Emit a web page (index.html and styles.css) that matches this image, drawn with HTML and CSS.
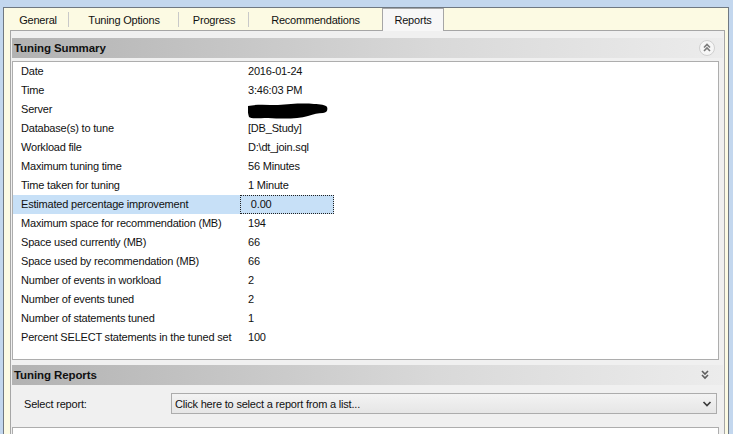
FILE: index.html
```html
<!DOCTYPE html>
<html lang="en">
<head>
    <meta charset="UTF-8">
    <meta name="viewport" content="width=device-width, initial-scale=1.0">
    <title>Database Engine Tuning Advisor - Reports</title>
    <link rel="stylesheet" href="styles.css">
</head>
<body>
    <div class="frame">

        <div class="tabs">
            <div class="tab sep" style="width: 62px">General</div>
            <div class="tab sep" style="width: 110px">Tuning Options</div>
            <div class="tab sep" style="width: 70px">Progress</div>
            <div class="tab" style="width: 133px">Recommendations</div>
            <div class="tab active" style="width: 62px">Reports</div>
        </div>

        <div class="page">

            <div class="section-head">
                <span>Tuning Summary</span>
                <svg class="collapse" width="16" height="16" viewBox="0 0 16 16">
                    <circle cx="8" cy="8" r="7.5" fill="#f6f6f6" stroke="#cfcfcf"/>
                    <path d="M5 7.5 L8 4.5 L11 7.5 M5 11 L8 8 L11 11" fill="none" stroke="#7a7a7a" stroke-width="1.6"/>
                </svg>
            </div>

            <div class="summary">
                <div class="row"><span class="key">Date</span><span class="val">2016-01-24</span></div>
                <div class="row"><span class="key">Time</span><span class="val">3:46:03 PM</span></div>
                <div class="row"><span class="key">Server</span><span class="val blot-cell">
                    <svg class="blot" width="80" height="16" viewBox="0 0 80 16">
                        <path d="M0 3 C8 1 20 2 30 2 C42 1 55 0 66 1 C72 1 78 2 79 4 C80 7 79 10 75 10 C70 10 66 11 60 13 C50 16 35 16 20 15 C10 15 3 16 1 14 C0 10 -1 6 0 3 Z" fill="#000"/>
                    </svg>
                </span></div>
                <div class="row"><span class="key">Database(s) to tune</span><span class="val">[DB_Study]</span></div>
                <div class="row"><span class="key">Workload file</span><span class="val">D:\dt_join.sql</span></div>
                <div class="row"><span class="key">Maximum tuning time</span><span class="val">56 Minutes</span></div>
                <div class="row"><span class="key">Time taken for tuning</span><span class="val">1 Minute</span></div>
                <div class="row sel"><span class="key">Estimated percentage improvement</span><span class="val">&nbsp;0.00</span></div>
                <div class="row"><span class="key">Maximum space for recommendation (MB)</span><span class="val">194</span></div>
                <div class="row"><span class="key">Space used currently (MB)</span><span class="val">66</span></div>
                <div class="row"><span class="key">Space used by recommendation (MB)</span><span class="val">66</span></div>
                <div class="row"><span class="key">Number of events in workload</span><span class="val">2</span></div>
                <div class="row"><span class="key">Number of events tuned</span><span class="val">2</span></div>
                <div class="row"><span class="key">Number of statements tuned</span><span class="val">1</span></div>
                <div class="row"><span class="key">Percent SELECT statements in the tuned set</span><span class="val">100</span></div>
            </div>

            <div class="section-head reports-head">
                <span>Tuning Reports</span>
                <svg class="expand" width="16" height="16" viewBox="0 0 16 16">
                    <path d="M5 4 L8 7 L11 4 M5 8 L8 11 L11 8" fill="none" stroke="#5e5e5e" stroke-width="1.6"/>
                </svg>
            </div>

            <div class="select-row">
                <label class="select-label">Select report:</label>
                <div class="dropdown">
                    <span>Click here to select a report from a list...</span>
                    <svg width="10" height="8" viewBox="0 0 10 8">
                        <path d="M1.5 2 L5 5.5 L8.5 2" fill="none" stroke="#3c3c3c" stroke-width="1.7"/>
                    </svg>
                </div>
            </div>

            <div class="report-box"></div>

        </div>
    </div>
</body>
</html>
```

FILE: styles.css
```css
html, body {
    margin: 0;
    height: 100%;
    overflow: hidden;
}

body {
    background-color: #c3d7ee;
    font-family: "Liberation Sans", Arial, sans-serif;
    font-size: 11px;
    letter-spacing: -0.2px;
    color: #111;
    padding: 7px 4px 0 3px;
    box-sizing: border-box;
}

.frame {
    height: 100%;
    box-sizing: border-box;
    border: 1px solid #6f7882;
    border-bottom: none;
    background-color: #fcfae3;
    display: flex;
    flex-direction: column;
    overflow: hidden;
}

.tabs {
    display: flex;
    align-items: flex-end;
    height: 22px;
    flex-shrink: 0;
    padding-left: 3px;
}

.tab {
    height: 22px;
    display: flex;
    align-items: center;
    justify-content: center;
    box-sizing: border-box;
    padding-top: 1px;
}

.tab.sep {
    background: linear-gradient(#c9c9c9, #c9c9c9) right 4px / 1px 15px no-repeat;
}

.tab.active {
    height: 23px;
    margin-bottom: -1px;
    background-color: #f7f7f7;
    border: 1px solid #a6a6a6;
    border-bottom: none;
    position: relative;
    z-index: 1;
    padding-top: 0;
}

.page {
    flex: 1;
    margin: 0 3px 0 6px;
    border: 1px solid #a6a6a6;
    border-bottom: none;
    background-color: #f0f0f0;
    padding: 7px 1px 0 1px;
}

.section-head {
    height: 20px;
    display: flex;
    align-items: center;
    justify-content: space-between;
    padding: 0 8px 0 2px;
    background: linear-gradient(to right, #b2b2b2, #d9d9d9 60%, #ececec);
    font-size: 11.5px;
    font-weight: bold;
    letter-spacing: -0.1px;
}

.summary {
    margin: 3px 4px 0 0;
    height: 299px;
    box-sizing: border-box;
    border: 1px solid #adadad;
    background-color: #fff;
}

.row {
    display: grid;
    grid-template-columns: 227px 94px;
    height: 19px;
    align-items: center;
}

.key, .val {
    height: 19px;
    line-height: 19px;
    padding-left: 8px;
    white-space: nowrap;
}

.blot-cell {
    display: flex;
    align-items: center;
}

.blot {
    display: block;
    margin-top: 2px;
}

.row.sel .key, .row.sel .val {
    background-color: #c7e0f7;
}

.row.sel .val {
    border: 1px dotted #222;
    box-sizing: border-box;
    line-height: 17px;
    padding-left: 7px;
}

.reports-head {
    margin-top: 5px;
    padding-right: 10px;
}

.select-row {
    display: flex;
    align-items: center;
    margin-top: 8px;
    padding-left: 12px;
}

.select-label {
    width: 147px;
}

.dropdown {
    width: 546px;
    height: 21px;
    box-sizing: border-box;
    border: 1px solid #acacac;
    background: linear-gradient(#f3f3f3, #e6e6e6);
    display: flex;
    align-items: center;
    justify-content: space-between;
    padding: 0 4px 0 3px;
}

.report-box {
    margin: 13px 4px 0 0;
    height: 40px;
    border: 1px solid #adadad;
    border-bottom: none;
    background-color: #fff;
}
```
